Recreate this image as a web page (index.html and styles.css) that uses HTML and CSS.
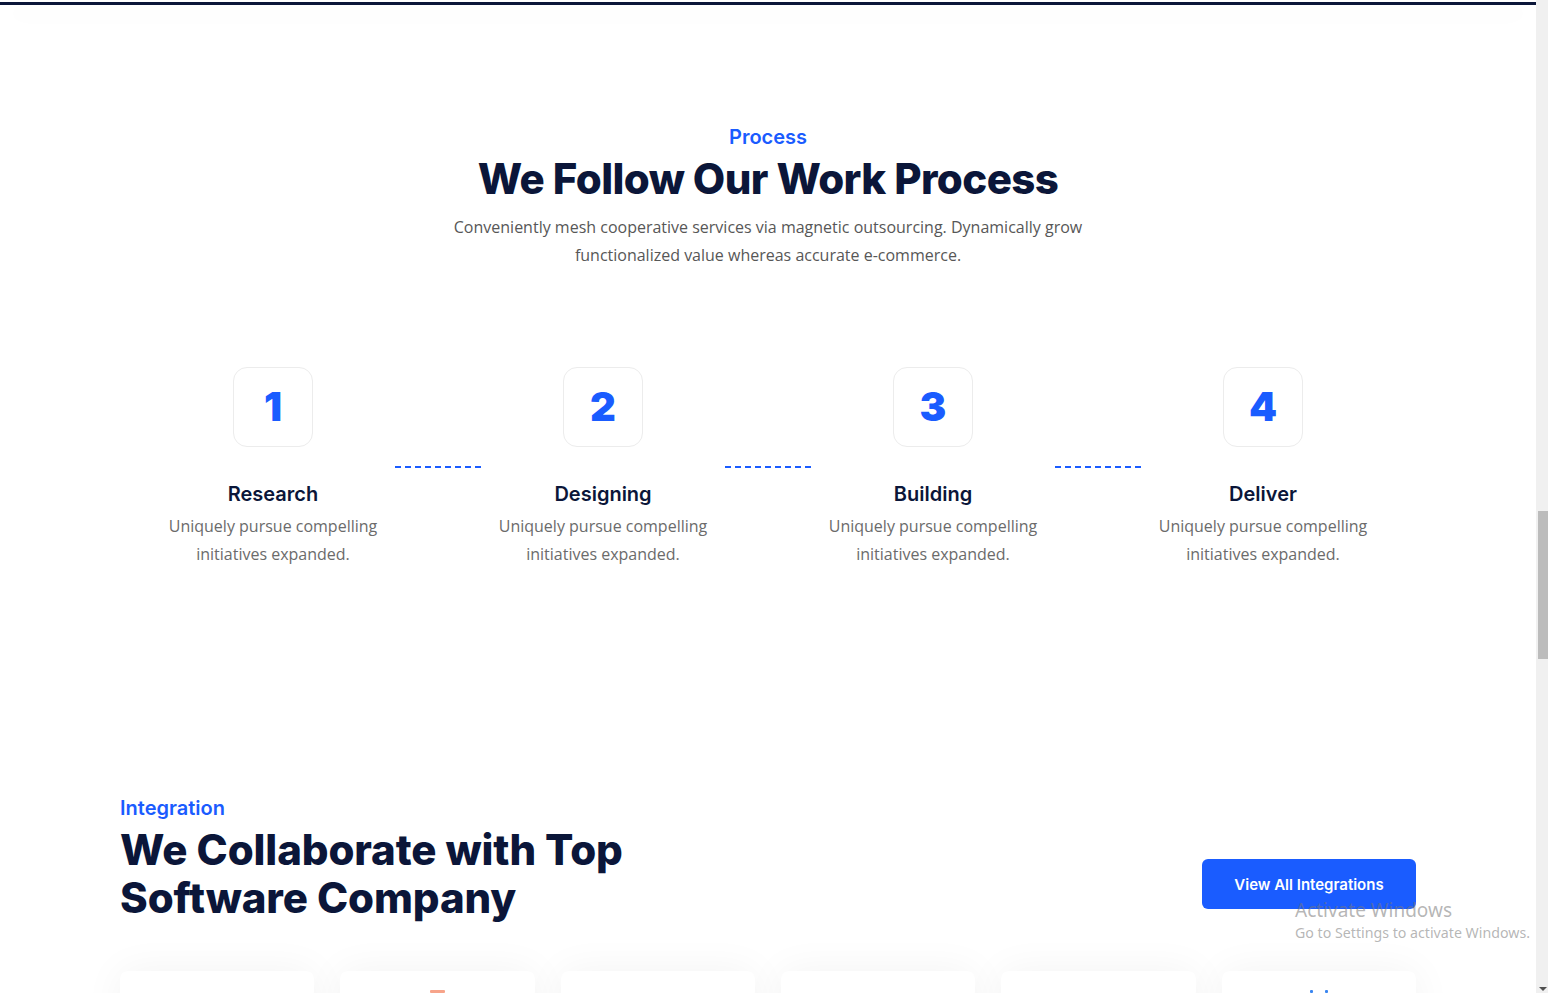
FILE: index.html
```html
<!DOCTYPE html>
<html lang="en">
<head>
<meta charset="utf-8">
<title>Process</title>
<link rel="stylesheet" href="styles.css">
</head>
<body>
<div class="page">
  <div class="content">
    <div class="header"></div>

    <section class="process">
      <div class="section-head">
        <span class="eyebrow">Process</span>
        <h2 class="title">We Follow Our Work Process</h2>
        <p class="lead">Conveniently mesh cooperative services via magnetic outsourcing. Dynamically grow functionalized value whereas accurate e-commerce.</p>
      </div>

      <div class="steps">
        <div class="step">
          <div class="num">1</div>
          <h3 class="step-title">Research</h3>
          <p class="step-text">Uniquely pursue compelling initiatives expanded.</p>
          <span class="dash"></span>
        </div>
        <div class="step">
          <div class="num">2</div>
          <h3 class="step-title">Designing</h3>
          <p class="step-text">Uniquely pursue compelling initiatives expanded.</p>
          <span class="dash"></span>
        </div>
        <div class="step">
          <div class="num">3</div>
          <h3 class="step-title">Building</h3>
          <p class="step-text">Uniquely pursue compelling initiatives expanded.</p>
          <span class="dash"></span>
        </div>
        <div class="step">
          <div class="num">4</div>
          <h3 class="step-title">Deliver</h3>
          <p class="step-text">Uniquely pursue compelling initiatives expanded.</p>
        </div>
      </div>
    </section>

    <section class="integration">
      <div class="int-head">
        <div>
          <span class="eyebrow">Integration</span>
          <h2 class="title int-title">We Collaborate with Top<br>Software Company</h2>
        </div>
        <a class="btn" href="#">View All Integrations</a>
      </div>
      <div class="cards">
        <div class="card"></div>
        <div class="card"><span class="peek peek-orange"></span></div>
        <div class="card"></div>
        <div class="card"></div>
        <div class="card"></div>
        <div class="card"><span class="peek peek-blue"></span><span class="peek peek-blue2"></span></div>
      </div>
    </section>

    <div class="watermark">
      <div class="wm-title">Activate Windows</div>
      <div class="wm-sub">Go to Settings to activate Windows.</div>
    </div>
  </div>
  <div class="scrollbar">
    <div class="thumb"></div>
    <div class="arrow-down"></div>
  </div>
</div>
</body>
</html>
```

FILE: styles.css
```css
* { box-sizing: border-box; }

html, body {
  margin: 0;
  padding: 0;
  height: 100%;
  overflow: hidden;
  background: #ffffff;
}

body {
  font-family: "Open Sans", "Noto Sans", sans-serif;
  color: #575757;
}

.page {
  display: flex;
  height: 993px;
}

.content {
  flex: 1;
  position: relative;
  overflow: hidden;
}

.header {
  margin-top: 2px;
  height: 3px;
  background: #0b1639;
  box-shadow: 0 10px 30px rgba(0, 0, 0, 0.06);
}

.eyebrow {
  display: block;
  font-family: "Inter", "Noto Sans", sans-serif;
  font-weight: 600;
  font-size: 20px;
  line-height: 24px;
  color: #1a5cff;
}

.title {
  margin: 0;
  font-family: "Inter", "Noto Sans", sans-serif;
  font-weight: 800;
  font-size: 42px;
  line-height: 48px;
  color: #0b1639;
  letter-spacing: -0.6px;
}

.process {
  padding-top: 120px;
}

.section-head {
  text-align: center;
}

.section-head .title {
  margin-top: 6px;
}

.lead {
  width: 660px;
  margin: 10px auto 0;
  font-size: 16px;
  line-height: 28px;
  color: #575757;
}

.steps {
  width: 1320px;
  margin: 98px auto 0;
  display: grid;
  grid-template-columns: repeat(4, 1fr);
}

.step {
  position: relative;
  padding: 0 12px;
  display: flex;
  flex-direction: column;
  align-items: center;
  text-align: center;
}

.num {
  width: 80px;
  height: 80px;
  border: 1px solid #ececec;
  border-radius: 14px;
  display: flex;
  align-items: center;
  justify-content: center;
  padding-bottom: 2px;
  font-family: "Inter", "Noto Sans", sans-serif;
  font-weight: 900;
  font-size: 40px;
  color: #1a5cff;
}

.step-title {
  margin: 34px 0 0;
  font-family: "Inter", "Noto Sans", sans-serif;
  font-weight: 600;
  font-size: 20px;
  line-height: 26px;
  color: #0b1639;
}

.step-text {
  margin: 5px 0 0;
  width: 230px;
  font-size: 16px;
  line-height: 28px;
  color: #6b6b6b;
}

.dash {
  position: absolute;
  left: 287px;
  top: 99px;
  width: 86px;
  height: 2px;
  background: repeating-linear-gradient(to right, #1a5cff 0 6px, transparent 6px 10px);
}

.integration {
  width: 1296px;
  margin: 228px auto 0;
}

.int-head {
  display: flex;
  justify-content: space-between;
  align-items: flex-end;
}

.int-title {
  margin-top: 6px;
  letter-spacing: -0.1px;
}

.btn {
  display: flex;
  align-items: center;
  justify-content: center;
  width: 214px;
  height: 50px;
  margin-bottom: 13px;
  background: #1a5cff;
  color: #ffffff;
  border-radius: 6px;
  text-decoration: none;
  font-family: "Inter", "Noto Sans", sans-serif;
  font-weight: 600;
  font-size: 15px;
}

.cards {
  margin-top: 49px;
  display: grid;
  grid-template-columns: repeat(6, 1fr);
  gap: 26px;
}

.card {
  position: relative;
  height: 160px;
  background: #ffffff;
  border-radius: 8px;
  box-shadow: 0 0 40px rgba(0, 0, 0, 0.05);
}

.peek {
  position: absolute;
  height: 3px;
  top: 19px;
  border-radius: 1px;
}

.peek-orange {
  left: 90px;
  width: 15px;
  background: #f7a48a;
}

.peek-blue {
  left: 88px;
  width: 3px;
  background: #3a86f0;
}

.peek-blue2 {
  left: 103px;
  width: 3px;
  background: #3a86f0;
}

.watermark {
  position: absolute;
  left: 1295px;
  top: 898px;
  color: rgba(120, 120, 120, 0.55);
  font-family: "Noto Sans", "Open Sans", sans-serif;
}

.wm-title {
  font-size: 19px;
  line-height: 24px;
}

.wm-sub {
  font-size: 14.2px;
  line-height: 20px;
  margin-top: 1px;
}

.scrollbar {
  width: 12px;
  position: relative;
  background: #f0f0f0;
}

.thumb {
  position: absolute;
  left: 2px;
  right: 0;
  top: 511px;
  height: 148px;
  background: #bcbcbc;
}

.arrow-down {
  position: absolute;
  left: 3px;
  bottom: 2px;
  width: 0;
  height: 0;
  border-left: 4px solid transparent;
  border-right: 4px solid transparent;
  border-top: 4px solid #505050;
}
```
